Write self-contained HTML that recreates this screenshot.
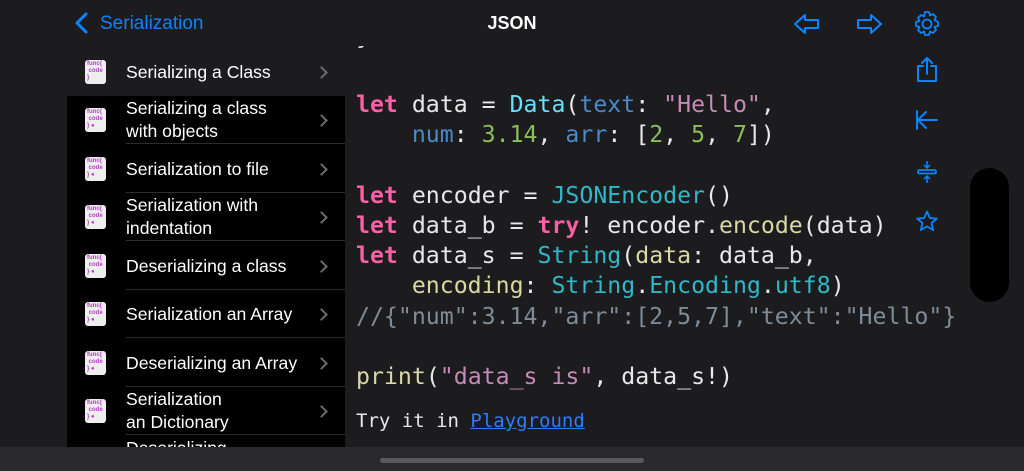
<!DOCTYPE html>
<html><head><meta charset="utf-8"><style>
*{margin:0;padding:0;box-sizing:border-box}
body{width:1024px;height:471px;background:#1c1c1e;overflow:hidden;position:relative;font-family:"Liberation Sans",sans-serif;color:#fff}
.top{position:absolute;left:0;top:0;width:1024px;height:46px;background:#1c1c1e;z-index:5}
.back{position:absolute;left:100px;top:13px;color:#0a84ff;font-size:19px;z-index:6}
.title{position:absolute;left:0;width:1024px;text-align:center;top:13px;font-size:18px;font-weight:bold;z-index:6}
.side{position:absolute;left:67px;top:48px;width:278px;height:399px;background:#000;overflow:hidden}
.row{position:absolute;left:0;width:278px;height:48px}
.row .t{position:absolute;left:59px;font-size:17.6px;line-height:23px;color:#fff}
.row .sep{position:absolute;left:59px;right:0;bottom:0;height:1px;background:#2c2c2e}
.row .ch{position:absolute;width:9px;height:9px;border-right:2px solid #6b6b70;border-top:2px solid #6b6b70;transform:rotate(45deg)}
.ic{position:absolute;left:18px;top:12px;width:21px;height:24px;background:#eee;border-radius:3px;font-size:6px;line-height:7px;color:#b040c0;padding:1px 2px;font-weight:bold}
.code{position:absolute;left:345px;top:46px;width:600px;height:401px;background:#1c1c1e}
pre{position:absolute;left:356px;font-family:"DejaVu Sans Mono","Liberation Mono",monospace;font-size:23.2px;line-height:30.2px;color:#e8e8e8;top:60px}
.k{color:#fc5fa3;font-weight:bold}.ty{color:#6bdfff}.p{color:#4b8ac8}.s{color:#c58ab5}.n{color:#8bbf5a}.f{color:#d9d8a4}.c{color:#7f8c98}.cy{color:#30b7c8}
.try{position:absolute;left:356px;top:410px;font-family:"DejaVu Sans Mono",monospace;font-size:19px;color:#e8e8e8}
.try a{color:#2f7bff;text-decoration:underline}
.bot{position:absolute;left:0;top:447px;width:1024px;height:24px;background:#2a2a2c}
.hb{position:absolute;left:380px;top:458px;width:264px;height:5px;border-radius:3px;background:#5a5a5e}
.scroll{position:absolute;left:970px;top:168px;width:39px;height:134px;border-radius:20px;background:#000}
svg{position:absolute;z-index:7}
</style></head><body>
<div class="top"></div>
<div class="code"></div>
<svg style="left:74px;top:12px" width="16" height="22"><path d="M12 2 L3 11 L12 20" stroke="#0a84ff" stroke-width="3" fill="none" stroke-linecap="round" stroke-linejoin="round"/></svg>
<div class="back">Serialization</div>
<div class="title">JSON</div>
<svg style="left:793px;top:12px" width="28" height="24"><path d="M2 12 L12 3 L12 8 L25 8 L25 16 L12 16 L12 21 Z" stroke="#0a84ff" stroke-width="2" fill="none" stroke-linejoin="round"/></svg>
<svg style="left:855px;top:12px" width="28" height="24"><path d="M26 12 L16 3 L16 8 L3 8 L3 16 L16 16 L16 21 Z" stroke="#0a84ff" stroke-width="2" fill="none" stroke-linejoin="round"/></svg>
<svg style="left:913px;top:10px" width="28" height="28" viewBox="0 0 28 28"><path d="M12 2h4l1 3.5 3-1.5 3 3-1.5 3L25 12v4l-3.5 1 1.5 3-3 3-3-1.5L16 25h-4l-1-3.5-3 1.5-3-3 1.5-3L3 16v-4l3.5-1L5 8l3-3 3 1.5z" stroke="#0a84ff" stroke-width="1.8" fill="none" stroke-linejoin="round"/><circle cx="14" cy="14" r="4.5" stroke="#0a84ff" stroke-width="1.8" fill="none"/></svg>
<svg style="left:915px;top:56px" width="24" height="28"><path d="M8 10H3v15h18V10h-5M12 18V2M7 7l5-5 5 5" stroke="#0a84ff" stroke-width="2" fill="none" stroke-linejoin="round" stroke-linecap="round"/></svg>
<svg style="left:915px;top:108px" width="24" height="24"><path d="M2 3v18M22 12H4M11 4l-8 8 8 8" stroke="#0a84ff" stroke-width="2" fill="none" stroke-linecap="round"/></svg>
<svg style="left:916px;top:160px" width="22" height="24"><path d="M11 1v7M8 5l3 3 3-3M11 23v-7M8 19l3-3 3 3" stroke="#0a84ff" stroke-width="1.5" fill="none"/><rect x="2" y="10" width="18" height="3.5" rx="1.5" stroke="#0a84ff" stroke-width="1.8" fill="none"/></svg>
<svg style="left:916px;top:210px" width="22" height="22"><path d="M11 1.5l2.8 6.5 7 .6-5.3 4.6 1.6 6.9L11 16.4 4.9 20l1.6-6.9L1.2 8.6l7-.6z" stroke="#0a84ff" stroke-width="1.8" fill="none" stroke-linejoin="round"/></svg>
<div class="scroll"></div>
<div class="side">
<div class="row" style="top:0;background:#1c1c1e"><div class="ic">func{<br>&nbsp;code<br>}</div><div class="t" style="top:13px">Serializing a Class</div><div class="ch" style="left:250px;top:20px"></div></div>
<div class="row" style="top:48px"><div class="ic">func{<br>&nbsp;code<br>} ●</div><div class="t" style="top:1px">Serializing a class<br>with objects</div><div class="sep"></div><div class="ch" style="left:250px;top:20px"></div></div>
<div class="row" style="top:97px"><div class="ic">func{<br>&nbsp;code<br>} ●</div><div class="t" style="top:13px">Serialization to file</div><div class="sep"></div><div class="ch" style="left:250px;top:20px"></div></div>
<div class="row" style="top:145px"><div class="ic">func{<br>&nbsp;code<br>} ●</div><div class="t" style="top:1px">Serialization with<br>indentation</div><div class="sep"></div><div class="ch" style="left:250px;top:20px"></div></div>
<div class="row" style="top:194px"><div class="ic">func{<br>&nbsp;code<br>} ●</div><div class="t" style="top:13px">Deserializing a class</div><div class="sep"></div><div class="ch" style="left:250px;top:20px"></div></div>
<div class="row" style="top:242px"><div class="ic">func{<br>&nbsp;code<br>} ●</div><div class="t" style="top:13px">Serialization an Array</div><div class="sep"></div><div class="ch" style="left:250px;top:20px"></div></div>
<div class="row" style="top:291px"><div class="ic">func{<br>&nbsp;code<br>} ●</div><div class="t" style="top:13px">Deserializing an Array</div><div class="sep"></div><div class="ch" style="left:250px;top:20px"></div></div>
<div class="row" style="top:339px"><div class="ic">func{<br>&nbsp;code<br>} ●</div><div class="t" style="top:1px">Serialization<br>an Dictionary</div><div class="sep"></div><div class="ch" style="left:250px;top:20px"></div></div>
<div class="row" style="top:388px"><div class="t" style="top:1px">Deserializing</div></div>
</div>
<pre><span style="position:relative;top:-38px">}</span>
<span class="k">let</span> data = <span class="ty">Data</span>(<span class="p">text</span>: <span class="s">"Hello"</span>,
    <span class="p">num</span>: <span class="n">3.14</span>, <span class="p">arr</span>: [<span class="n">2</span>, <span class="n">5</span>, <span class="n">7</span>])

<span class="k">let</span> encoder = <span class="cy">JSONEncoder</span>()
<span class="k">let</span> data_b = <span class="k">try</span>! encoder.<span class="f">encode</span>(data)
<span class="k">let</span> data_s = <span class="cy">String</span>(<span class="f">data</span>: data_b,
    <span class="f">encoding</span>: <span class="cy">String</span>.<span class="cy">Encoding</span>.<span class="cy">utf8</span>)
<span class="c">//{"num":3.14,"arr":[2,5,7],"text":"Hello"}</span>

<span class="f">print</span>(<span class="s">"data_s is"</span>, data_s!)</pre>
<div class="try">Try it in <a>Playground</a></div>
<div class="bot"></div><div class="hb"></div>
</body></html>
